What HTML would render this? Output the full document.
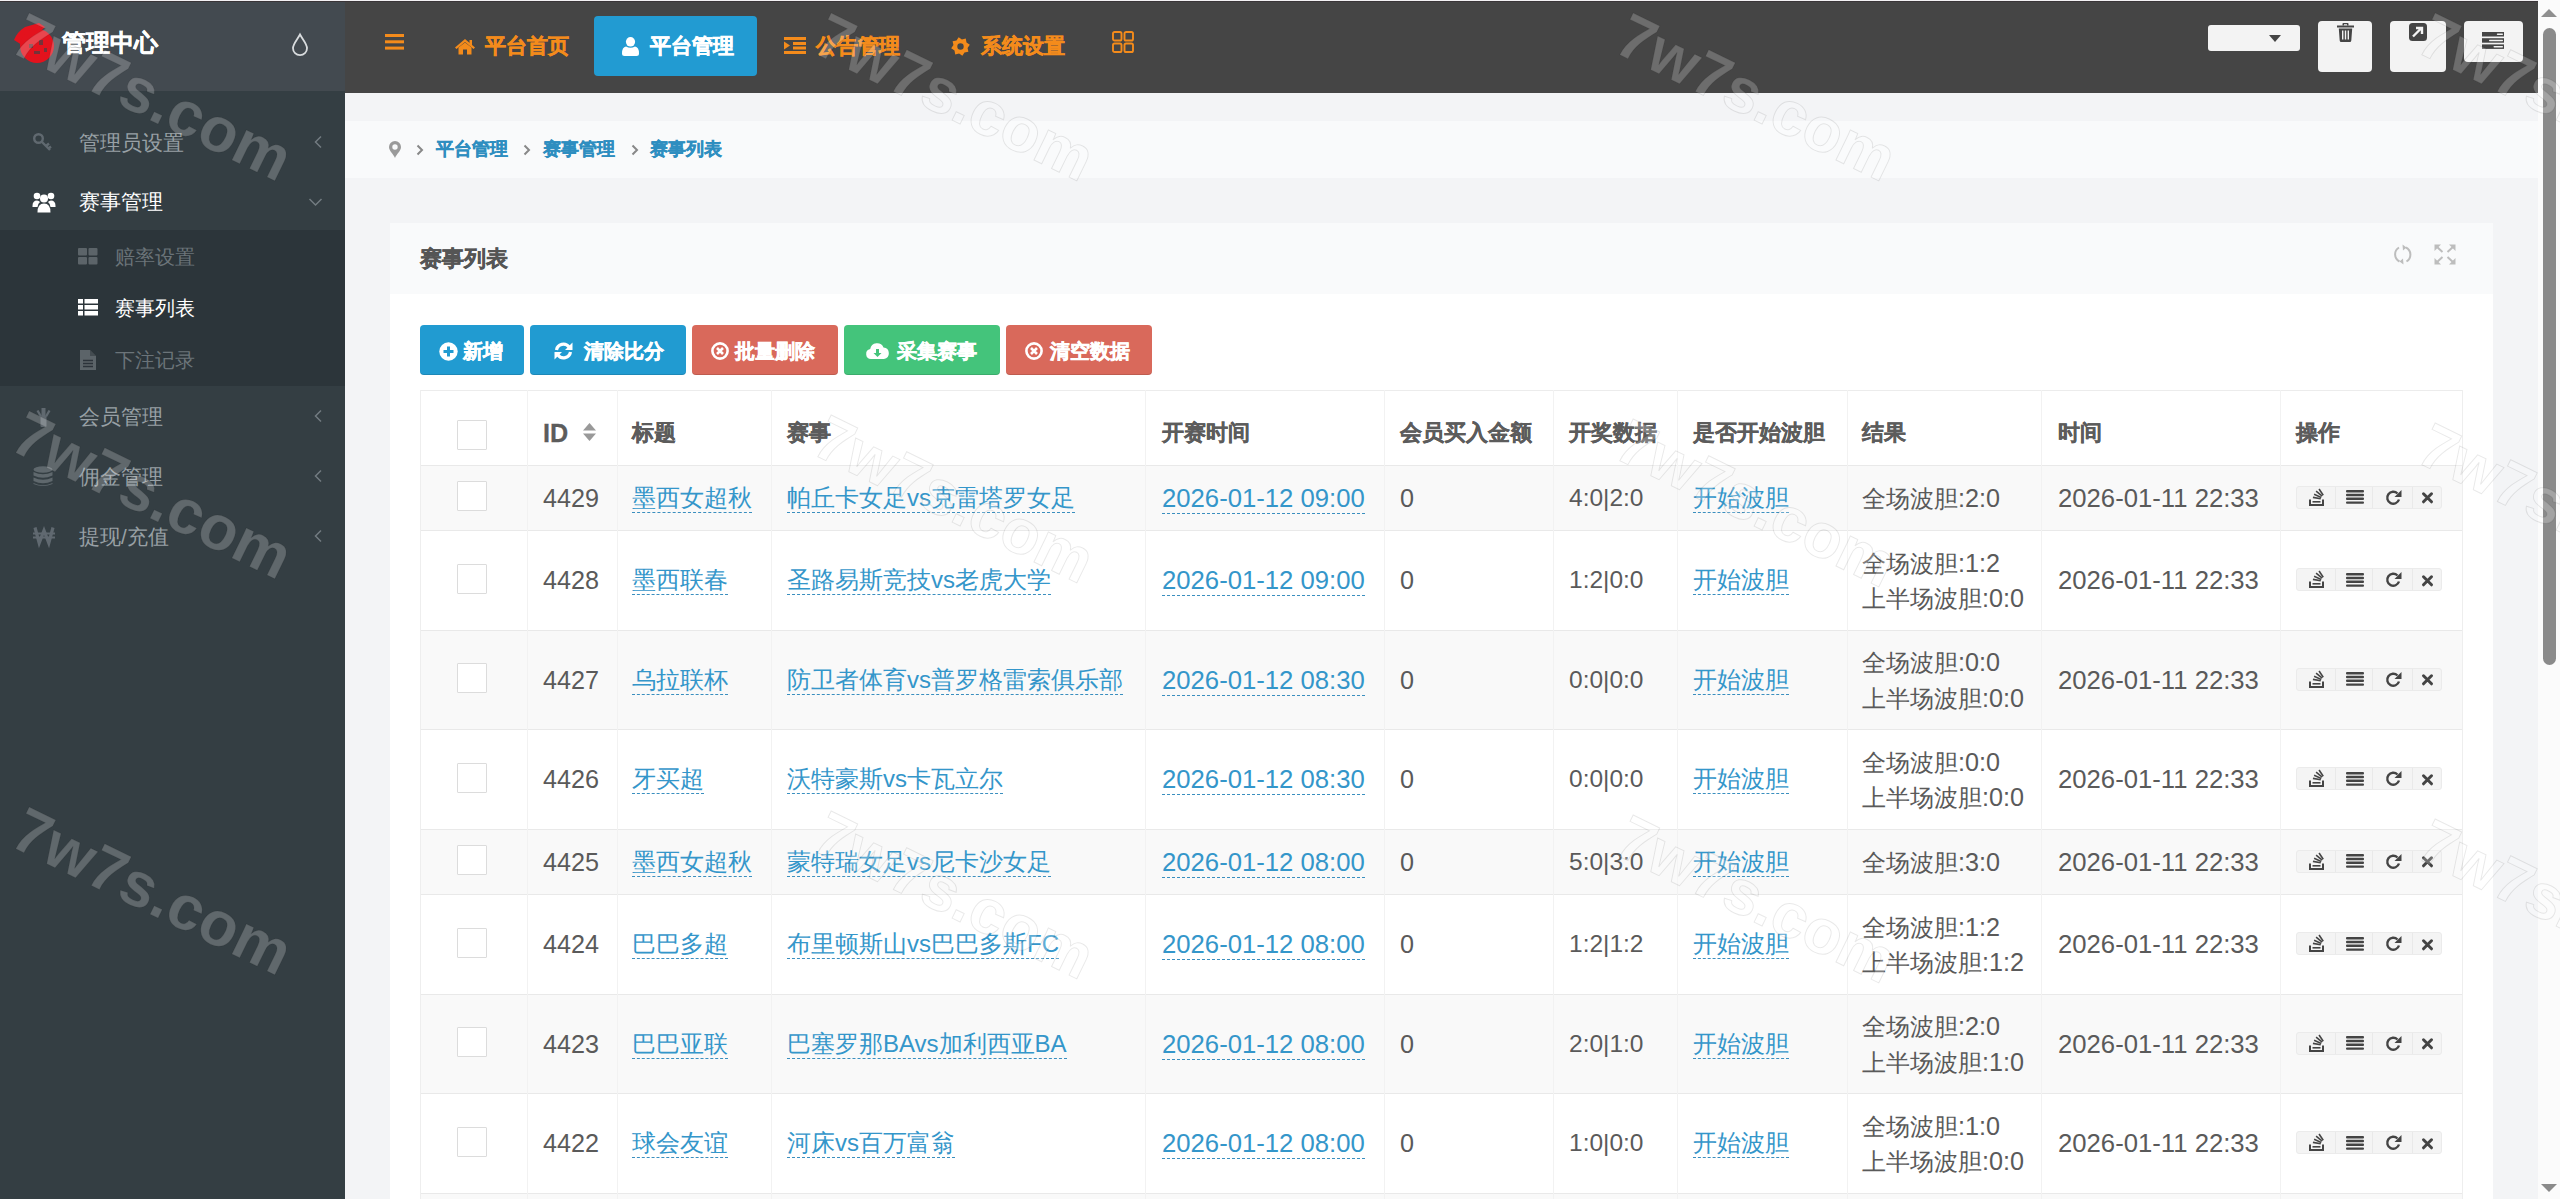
<!DOCTYPE html>
<html><head><meta charset="utf-8"><style>
*{box-sizing:border-box;margin:0;padding:0}
html,body{width:2560px;height:1199px;overflow:hidden}
body{position:relative;background:#f3f4f6;font-family:"Liberation Sans",sans-serif;color:#555}
.a{position:absolute;white-space:nowrap}
svg{position:absolute;display:block;overflow:visible}

#side{position:absolute;left:0;top:0;width:345px;height:1199px;background:#343e43}
#brand{position:absolute;left:0;top:0;width:345px;height:91px;background:#434a50}
#sub{position:absolute;left:0;top:230px;width:345px;height:156px;background:#2c353a}
.mi{position:absolute;left:79px;font-size:20.6px;line-height:30px;margin-top:1px;color:#98a0a5;white-space:nowrap}
.mi.w{color:#fff}
.si{position:absolute;left:115px;font-size:19.5px;line-height:30px;color:#6b7479;white-space:nowrap}
.si.w{color:#fff}
.topline{position:absolute;left:0;top:0;width:2538px;height:2px;background:#3a3538;border-top:1px solid #f3f1f4}

#top{position:absolute;left:345px;top:2px;width:2193px;height:91px;background:#454545}
.nav{position:absolute;top:30px;font-size:20.9px;font-weight:bold;color:#f48b1b;line-height:32px;white-space:nowrap;-webkit-text-stroke:.5px #f48b1b}
#navact{position:absolute;left:594px;top:16px;width:163px;height:60px;background:#229bd2;border-radius:4px}
.tb{position:absolute;background:#f3f3f3;border-radius:4px}

#crumb{position:absolute;left:345px;top:121px;width:2193px;height:57px;background:#f9fafb}
.cr{position:absolute;top:134px;font-size:18px;font-weight:bold;color:#2e8ec0;line-height:30px;white-space:nowrap;-webkit-text-stroke:.3px #2e8ec0}
#panel{position:absolute;left:390px;top:223px;width:2103px;height:980px;background:#fff}
#phead{position:absolute;left:390px;top:223px;width:2103px;height:71px;background:#f9fafb}
#ptitle{position:absolute;left:420px;top:244px;font-size:22px;font-weight:bold;color:#555;line-height:30px;-webkit-text-stroke:.4px #555}
.btn{position:absolute;top:325px;height:50px;border-radius:4px}
.bt{position:absolute;top:336px;font-size:20px;font-weight:bold;color:#fff;line-height:30px;white-space:nowrap;-webkit-text-stroke:.5px #fff}

.tc{position:absolute;white-space:nowrap;font-size:24px;line-height:34.29px;color:#5a5a5a}
.th{position:absolute;white-space:nowrap;font-size:21.8px;line-height:34.29px;color:#5c5c5c;font-weight:bold;-webkit-text-stroke:.3px #5c5c5c}
.lk{color:#3496ca;border-bottom:1px dashed #3b8fbf;padding-bottom:1px}
.n{font-size:25.2px}.d{font-size:25.7px}.sc{font-size:24.5px}
.cb{position:absolute;width:30px;height:30px;border:1px solid #dcdcdc;background:#fff;border-radius:1px}
.ops{position:absolute;height:23px;width:146px;background:#f4f4f4;border:1px solid #ebebeb;border-radius:3px}

.wm{position:absolute;font-family:"Liberation Sans",sans-serif;font-size:63px;font-weight:bold;color:rgba(255,255,255,.22);-webkit-text-stroke:1px rgba(0,0,0,.09);transform-origin:0 0;transform:rotate(26deg);white-space:nowrap;line-height:1;pointer-events:none}
</style></head>
<body>
<div id="side"></div><div id="brand"></div><div id="sub"></div><div class="topline"></div>
<svg style="left:9px;top:18px" width="50" height="48" viewBox="0 0 50 48">
<g fill="#e3121d">
<path d="M5 22 Q8 14 16 9 L30 5 L36 9 L24 20 L13 27 Z"/>
<circle cx="28" cy="28" r="17"/>
</g>
<g fill="#5a3a40" opacity=".8"><rect x="20" y="26" width="4" height="4"/><rect x="30" y="22" width="4" height="5"/><rect x="25" y="33" width="6" height="3"/><rect x="35" y="30" width="3" height="4"/></g>
</svg>
<div class="a" style="left:62px;top:27px;font-size:23.5px;font-weight:bold;color:#fff;line-height:32px;-webkit-text-stroke:.4px #fff">管理中心</div>
<svg style="left:291px;top:33px" width="18" height="23" viewBox="0 0 18 23"><path d="M9 1.5 C12 7 16 11 16 15.2 A7 7 0 0 1 2 15.2 C2 11 6 7 9 1.5 Z" fill="none" stroke="#d9dcde" stroke-width="1.8"/></svg>
<div class="mi" style="top:127px">管理员设置</div>
<div class="mi w" style="top:186px">赛事管理</div>
<div class="si" style="top:242px">赔率设置</div>
<div class="si w" style="top:293px">赛事列表</div>
<div class="si" style="top:345px">下注记录</div>
<div class="mi" style="top:401px">会员管理</div>
<div class="mi" style="top:461px">佣金管理</div>
<div class="mi" style="top:521px">提现/充值</div>
<svg style="left:313px;top:135px" width="10" height="14" viewBox="0 0 10 14"><path d="M8 1.5 L2.5 7 L8 12.5" fill="none" stroke="#737c81" stroke-width="1.5"/></svg>
<svg style="left:313px;top:409px" width="10" height="14" viewBox="0 0 10 14"><path d="M8 1.5 L2.5 7 L8 12.5" fill="none" stroke="#737c81" stroke-width="1.5"/></svg>
<svg style="left:313px;top:469px" width="10" height="14" viewBox="0 0 10 14"><path d="M8 1.5 L2.5 7 L8 12.5" fill="none" stroke="#737c81" stroke-width="1.5"/></svg>
<svg style="left:313px;top:529px" width="10" height="14" viewBox="0 0 10 14"><path d="M8 1.5 L2.5 7 L8 12.5" fill="none" stroke="#737c81" stroke-width="1.5"/></svg>
<svg style="left:308px;top:197px" width="15" height="10" viewBox="0 0 15 10"><path d="M1.5 2 L7.5 8 L13.5 2" fill="none" stroke="#737c81" stroke-width="1.5"/></svg>
<svg style="left:32px;top:132px" width="22" height="20" viewBox="0 0 22 20"><g fill="none" stroke="#606970" stroke-width="2.4"><circle cx="6.5" cy="6.5" r="4.3"/><path d="M9.5 9.5 L18 18 M14 14 L17 11.5 M16.5 16.5 L19 14.5"/></g></svg>
<svg style="left:32px;top:191px" width="24" height="22" viewBox="0 0 24 22"><g fill="#fff">
<circle cx="5" cy="5" r="3.3"/><circle cx="19" cy="5" r="3.3"/><circle cx="12" cy="7.5" r="4"/>
<path d="M0.5 15 Q0.5 9.5 5 9.5 Q7 9.5 8 11 Q5.5 13 5.5 16 L0.5 16 Z"/><path d="M23.5 15 Q23.5 9.5 19 9.5 Q17 9.5 16 11 Q18.5 13 18.5 16 L23.5 16 Z"/>
<path d="M5.5 21.5 Q5.5 12.5 12 12.5 Q18.5 12.5 18.5 21.5 Z"/></g></svg>
<svg style="left:78px;top:248px" width="20" height="17" viewBox="0 0 20 17"><g fill="#5c6469"><rect x="0" y="0" width="9" height="7.5" rx="1"/><rect x="10.5" y="0" width="9" height="7.5" rx="1"/><rect x="0" y="9" width="9" height="7.5" rx="1"/><rect x="10.5" y="9" width="9" height="7.5" rx="1"/></g></svg>
<svg style="left:78px;top:299px" width="20" height="17" viewBox="0 0 20 17"><g fill="#fff"><rect x="0" y="0" width="5" height="4.5"/><rect x="6.5" y="0" width="13.5" height="4.5"/><rect x="0" y="6" width="5" height="4.5"/><rect x="6.5" y="6" width="13.5" height="4.5"/><rect x="0" y="12" width="5" height="4.5"/><rect x="6.5" y="12" width="13.5" height="4.5"/></g></svg>
<svg style="left:80px;top:350px" width="16" height="20" viewBox="0 0 16 20"><path d="M0 0 H10 L16 6 V20 H0 Z" fill="#5c6469"/><path d="M10 0 V6 H16" fill="#2c333a" opacity=".5"/><g stroke="#2c333a" stroke-width="1.3"><path d="M3 10.5 H13 M3 13.5 H13 M3 16.5 H13"/></g></svg>
<svg style="left:36px;top:408px" width="15" height="19" viewBox="0 0 15 19"><g fill="#606970"><path d="M5.5 0 H9.5 V8 H5.5 Z"/><path d="M0.5 3 L2.5 2 L6 8 L4 9 Z"/><path d="M14.5 3 L12.5 2 L9 8 L11 9 Z"/><rect x="4.5" y="8" width="6" height="11" rx="1"/></g></svg>
<svg style="left:33px;top:466px" width="20" height="21" viewBox="0 0 20 21"><g fill="#5f686d"><ellipse cx="10" cy="3.5" rx="9.5" ry="3.3"/><path d="M0.5 6 Q10 10.5 19.5 6 V9.5 Q10 14 0.5 9.5 Z"/><path d="M0.5 11.5 Q10 16 19.5 11.5 V15 Q10 19.5 0.5 15 Z"/><path d="M0.5 17 Q10 21.5 19.5 17 V18 Q10 22 0.5 18 Z"/></g></svg>
<svg style="left:33px;top:527px" width="22" height="17" viewBox="0 0 22 17"><g fill="none" stroke="#606970"><path d="M2 0.5 L6.2 16 L11 3.5 L15.8 16 L20 0.5" stroke-width="3.2"/><path d="M0 6.5 H22 M0 10.5 H22" stroke-width="1.8"/></g></svg>
<div id="top"></div><div id="navact"></div>
<svg style="left:385px;top:34px" width="19" height="16" viewBox="0 0 19 16"><g fill="#f48b1b"><rect x="0" y="0" width="19" height="3"/><rect x="0" y="6.3" width="19" height="3"/><rect x="0" y="12.6" width="19" height="3"/></g></svg>
<svg style="left:455px;top:39px" width="20" height="16" viewBox="0 0 20 16"><g fill="#f48b1b"><path d="M10 0 L20 8.5 L18.5 10 L10 3 L1.5 10 L0 8.5 Z"/><path d="M3.5 8.5 L10 3.5 L16.5 8.5 V15.5 H12 V10.5 H8 V15.5 H3.5 Z"/><rect x="14.5" y="1" width="2.5" height="5"/></g></svg>
<div class="nav" style="left:485px">平台首页</div>
<svg style="left:622px;top:37px" width="17" height="19" viewBox="0 0 17 19"><g fill="#fff"><ellipse cx="8.5" cy="4.8" rx="4.6" ry="4.8"/><path d="M0 16.5 Q0 10 4 9.5 Q8.5 12 13 9.5 Q17 10 17 16.5 Q17 19 14.5 19 H2.5 Q0 19 0 16.5 Z"/></g></svg>
<div class="nav" style="left:650px;color:#fff;-webkit-text-stroke:.5px #fff">平台管理</div>
<svg style="left:784px;top:37px" width="22" height="17" viewBox="0 0 22 17"><g fill="#f48b1b"><rect x="0" y="0" width="22" height="3"/><rect x="9" y="5" width="13" height="3"/><rect x="9" y="9.5" width="13" height="3"/><rect x="0" y="14" width="22" height="3"/><path d="M0 4.5 L6 8.5 L0 12.5 Z"/></g></svg>
<div class="nav" style="left:816px">公告管理</div>
<svg style="left:951px;top:37px" width="19" height="19" viewBox="0 0 19 19"><path fill="#f48b1b" fill-rule="evenodd" d="M18.82,7.65 L16.56,10.90 L17.40,14.78 L13.50,15.49 L11.35,18.82 L8.10,16.56 L4.22,17.40 L3.51,13.50 L0.18,11.35 L2.44,8.10 L1.60,4.22 L5.50,3.51 L7.65,0.18 L10.90,2.44 L14.78,1.60 L15.49,5.50 Z M9.5 6.3 A3.2 3.2 0 1 0 9.5 12.7 A3.2 3.2 0 1 0 9.5 6.3 Z"/></svg>
<div class="nav" style="left:981px">系统设置</div>
<svg style="left:1112px;top:31px" width="22" height="22" viewBox="0 0 22 22"><g fill="none" stroke="#f48b1b" stroke-width="1.9"><rect x="1" y="1" width="8.5" height="8.5" rx="1.6"/><rect x="12.5" y="1" width="8.5" height="8.5" rx="1.6"/><rect x="1" y="12.5" width="8.5" height="8.5" rx="1.6"/><rect x="12.5" y="12.5" width="8.5" height="8.5" rx="1.6"/></g></svg>
<div class="tb" style="left:2208px;top:25px;width:92px;height:26px;border-radius:3px"></div>
<svg style="left:2269px;top:35px" width="12" height="7" viewBox="0 0 12 7"><path d="M0 0 H12 L6 7 Z" fill="#444"/></svg>
<div class="tb" style="left:2318px;top:21px;width:54px;height:51px"></div>
<svg style="left:2337px;top:23px" width="17" height="19" viewBox="0 0 17 19"><g fill="#454545"><rect x="0" y="2.5" width="17" height="2"/><path d="M5.5 2.5 V0.8 Q5.5 0 6.3 0 H10.7 Q11.5 0 11.5 0.8 V2.5 H10 V1.3 H7 V2.5 Z"/><path d="M1.8 5.5 H15.2 L14.3 17.5 Q14.2 19 12.8 19 H4.2 Q2.8 19 2.7 17.5 Z"/></g><g fill="#f3f3f3"><rect x="5" y="7.5" width="1.4" height="9"/><rect x="7.8" y="7.5" width="1.4" height="9"/><rect x="10.6" y="7.5" width="1.4" height="9"/></g></svg>
<div class="tb" style="left:2390px;top:21px;width:56px;height:51px"></div>
<svg style="left:2409px;top:23px" width="18" height="18" viewBox="0 0 18 18"><rect x="0" y="0" width="18" height="18" rx="3.5" fill="#454545"/><path d="M4 13.5 L12 5.5 M7 5 H13 V11" fill="none" stroke="#f3f3f3" stroke-width="2.4"/></svg>
<div class="tb" style="left:2464px;top:21px;width:59px;height:41px"></div>
<svg style="left:2482px;top:32px" width="22" height="17" viewBox="0 0 22 17"><g fill="#454545"><rect x="0" y="0" width="22" height="4.5"/><rect x="0" y="6.2" width="22" height="4.5"/><rect x="0" y="12.4" width="22" height="4.5"/></g><g fill="#f3f3f3"><rect x="14.8" y="1.5" width="6.2" height="1.5" rx=".7"/><rect x="7" y="7.7" width="14" height="1.5" rx=".7"/><rect x="11.5" y="13.9" width="9.5" height="1.5" rx=".7"/></g></svg>
<div class="a" style="left:2538px;top:0;width:22px;height:1199px;background:#fbfbfb"></div>
<svg style="left:2541px;top:9px" width="16" height="8" viewBox="0 0 16 8"><path d="M0 8 L8 0 L16 8 Z" fill="#8f8f8f"/></svg>
<div class="a" style="left:2543px;top:28px;width:13px;height:637px;background:#8a8a8a;border-radius:6.5px"></div>
<svg style="left:2541px;top:1184px" width="16" height="8" viewBox="0 0 16 8"><path d="M0 0 L8 8 L16 0 Z" fill="#8a8a8a"/></svg>
<div id="crumb"></div>
<svg style="left:389px;top:141px" width="12" height="17" viewBox="0 0 12 17"><path fill="#9a9a9a" fill-rule="evenodd" d="M6 0 A6 6 0 0 1 12 6 C12 10 7.5 13 6 17 C4.5 13 0 10 0 6 A6 6 0 0 1 6 0 Z M6 3.3 A2.7 2.7 0 1 0 6 8.7 A2.7 2.7 0 1 0 6 3.3 Z"/></svg>
<svg style="left:416px;top:144px" width="8" height="12" viewBox="0 0 8 12"><path d="M1.5 1.5 L6 6 L1.5 10.5" fill="none" stroke="#888" stroke-width="2"/></svg>
<svg style="left:523px;top:144px" width="8" height="12" viewBox="0 0 8 12"><path d="M1.5 1.5 L6 6 L1.5 10.5" fill="none" stroke="#888" stroke-width="2"/></svg>
<svg style="left:631px;top:144px" width="8" height="12" viewBox="0 0 8 12"><path d="M1.5 1.5 L6 6 L1.5 10.5" fill="none" stroke="#888" stroke-width="2"/></svg>
<div class="cr" style="left:436px">平台管理</div>
<div class="cr" style="left:543px">赛事管理</div>
<div class="cr" style="left:650px">赛事列表</div>
<div id="panel"></div><div id="phead"></div><div id="ptitle">赛事列表</div>
<svg style="left:2393px;top:244px" width="20" height="21" viewBox="0 0 20 21"><g fill="none" stroke="#bdbdbd" stroke-width="2"><path d="M6 3.5 A8 8 0 0 0 6.5 17.5"/><path d="M13.5 17.5 A8 8 0 0 0 13 3.5"/></g><g fill="#bdbdbd"><path d="M9.5 0.5 L13.5 3.5 L10 6.5 Z"/><path d="M10.5 20.5 L6.5 17.5 L10 14.5 Z"/></g></svg>
<svg style="left:2434px;top:244px" width="22" height="21" viewBox="0 0 22 21"><g fill="none" stroke="#bdbdbd" stroke-width="2"><path d="M2 2 L8.5 8 M20 2 L13.5 8 M2 19 L8.5 13 M20 19 L13.5 13"/></g><g fill="#bdbdbd"><path d="M0.5 0.5 H7 L0.5 7 Z"/><path d="M21.5 0.5 H15 L21.5 7 Z"/><path d="M0.5 20.5 H7 L0.5 14 Z"/><path d="M21.5 20.5 H15 L21.5 14 Z"/></g></svg>
<div class="btn" style="left:420px;width:104px;background:#219bd1;box-shadow:inset 0 -1px 0 rgba(0,0,0,.12)"></div>
<svg style="left:439px;top:342px" width="19" height="19" viewBox="0 0 19 19"><circle cx="9.5" cy="9.5" r="9.2" fill="#fff"/><path d="M9.5 4.5 V14.5 M4.5 9.5 H14.5" stroke="#219bd1" stroke-width="3"/></svg>
<div class="bt" style="left:463px">新增</div>
<div class="btn" style="left:530px;width:156px;background:#219bd1;box-shadow:inset 0 -1px 0 rgba(0,0,0,.12)"></div>
<svg style="left:554px;top:342px" width="19" height="18" viewBox="0 0 19 18"><g fill="none" stroke="#fff" stroke-width="3.2"><path d="M2.5 8 A7 7 0 0 1 15 5"/><path d="M16.5 10 A7 7 0 0 1 4 13"/></g><g fill="#fff"><path d="M18.5 0.5 V8 H11 Z"/><path d="M0.5 17.5 V10 H8 Z"/></g></svg>
<div class="bt" style="left:584px">清除比分</div>
<div class="btn" style="left:692px;width:146px;background:#d9695b;box-shadow:inset 0 -1px 0 rgba(0,0,0,.12)"></div>
<svg style="left:711px;top:342px" width="18" height="18" viewBox="0 0 18 18"><circle cx="9" cy="9" r="7.6" fill="none" stroke="#fff" stroke-width="2.6"/><path d="M6 6 L12 12 M12 6 L6 12" stroke="#fff" stroke-width="2.6"/></svg>
<div class="bt" style="left:735px">批量删除</div>
<div class="btn" style="left:844px;width:156px;background:#44c47b;box-shadow:inset 0 -1px 0 rgba(0,0,0,.12)"></div>
<svg style="left:866px;top:343px" width="23" height="16" viewBox="0 0 23 16"><path fill="#fff" d="M5 16 A5 5 0 0 1 4.2 6.1 A7 7 0 0 1 17.5 4.5 A5.8 5.8 0 0 1 18 16 Z"/><path fill="#44c47b" d="M10 6 H13 V10 H15.5 L11.5 14 L7.5 10 H10 Z"/></svg>
<div class="bt" style="left:897px">采集赛事</div>
<div class="btn" style="left:1006px;width:146px;background:#d9695b;box-shadow:inset 0 -1px 0 rgba(0,0,0,.12)"></div>
<svg style="left:1025px;top:342px" width="18" height="18" viewBox="0 0 18 18"><circle cx="9" cy="9" r="7.6" fill="none" stroke="#fff" stroke-width="2.6"/><path d="M6 6 L12 12 M12 6 L6 12" stroke="#fff" stroke-width="2.6"/></svg>
<div class="bt" style="left:1050px">清空数据</div>
<div class="a" style="left:420px;top:465.00px;width:2042px;height:65.29px;background:#f9f9f9;border-top:1px solid #e9e9e9"></div>
<div class="a" style="left:420px;top:530.29px;width:2042px;height:99.57px;background:#fff;border-top:1px solid #e9e9e9"></div>
<div class="a" style="left:420px;top:629.86px;width:2042px;height:99.57px;background:#f9f9f9;border-top:1px solid #e9e9e9"></div>
<div class="a" style="left:420px;top:729.43px;width:2042px;height:99.57px;background:#fff;border-top:1px solid #e9e9e9"></div>
<div class="a" style="left:420px;top:829.00px;width:2042px;height:65.29px;background:#f9f9f9;border-top:1px solid #e9e9e9"></div>
<div class="a" style="left:420px;top:894.29px;width:2042px;height:99.57px;background:#fff;border-top:1px solid #e9e9e9"></div>
<div class="a" style="left:420px;top:993.86px;width:2042px;height:99.57px;background:#f9f9f9;border-top:1px solid #e9e9e9"></div>
<div class="a" style="left:420px;top:1093.43px;width:2042px;height:99.57px;background:#fff;border-top:1px solid #e9e9e9"></div>
<div class="a" style="left:420px;top:1193.00px;width:2042px;height:80.00px;background:#f9f9f9;border-top:1px solid #e9e9e9"></div>
<div class="a" style="left:420px;top:390px;width:2042px;height:1px;background:#ececec"></div>
<div class="a" style="left:420px;top:390px;width:1px;height:809px;background:#eeeeee"></div>
<div class="a" style="left:527px;top:390px;width:1px;height:809px;background:#f2f2f2"></div>
<div class="a" style="left:617px;top:390px;width:1px;height:809px;background:#f2f2f2"></div>
<div class="a" style="left:771px;top:390px;width:1px;height:809px;background:#f2f2f2"></div>
<div class="a" style="left:1145px;top:390px;width:1px;height:809px;background:#f2f2f2"></div>
<div class="a" style="left:1384px;top:390px;width:1px;height:809px;background:#f2f2f2"></div>
<div class="a" style="left:1553px;top:390px;width:1px;height:809px;background:#f2f2f2"></div>
<div class="a" style="left:1677px;top:390px;width:1px;height:809px;background:#f2f2f2"></div>
<div class="a" style="left:1847px;top:390px;width:1px;height:809px;background:#f2f2f2"></div>
<div class="a" style="left:2041px;top:390px;width:1px;height:809px;background:#f2f2f2"></div>
<div class="a" style="left:2280px;top:390px;width:1px;height:809px;background:#f2f2f2"></div>
<div class="a" style="left:2462px;top:390px;width:1px;height:809px;background:#eeeeee"></div>
<div class="cb" style="left:457px;top:420px"></div>
<div class="th" style="left:543px;top:416px"><span class="n">ID</span></div>
<div class="th" style="left:632px;top:416px">标题</div>
<div class="th" style="left:787px;top:416px">赛事</div>
<div class="th" style="left:1162px;top:416px">开赛时间</div>
<div class="th" style="left:1400px;top:416px">会员买入金额</div>
<div class="th" style="left:1569px;top:416px">开奖数据</div>
<div class="th" style="left:1693px;top:416px">是否开始波胆</div>
<div class="th" style="left:1862px;top:416px">结果</div>
<div class="th" style="left:2058px;top:416px">时间</div>
<div class="th" style="left:2296px;top:416px">操作</div>
<svg style="left:583px;top:423px" width="13" height="18" viewBox="0 0 13 18"><g fill="#999"><path d="M6.5 0 L13 7.5 H0 Z"/><path d="M6.5 18 L13 10.5 H0 Z"/></g></svg>
<div class="cb" style="left:457px;top:481.14px"></div>
<div class="tc" style="left:543px;top:480.50px"><span class="n">4429</span></div>
<div class="tc" style="left:632px;top:480.50px"><span class="lk">墨西女超秋</span></div>
<div class="tc" style="left:787px;top:480.50px"><span class="lk">帕丘卡女足vs克雷塔罗女足</span></div>
<div class="tc" style="left:1162px;top:480.50px"><span class="lk d">2026-01-12 09:00</span></div>
<div class="tc" style="left:1400px;top:480.50px"><span class="n">0</span></div>
<div class="tc" style="left:1569px;top:480.50px"><span class="sc">4:0|2:0</span></div>
<div class="tc" style="left:1693px;top:480.50px"><span class="lk">开始波胆</span></div>
<div class="tc" style="left:1862px;top:480.50px">全场波胆<span class="n">:2:0</span></div>
<div class="tc" style="left:2058px;top:480.50px"><span class="d">2026-01-11 22:33</span></div>
<div class="ops" style="left:2296px;top:485.64px"></div><div class="a" style="left:2335px;top:486.64px;width:1px;height:21px;background:#e9e9e9"></div><div class="a" style="left:2372px;top:486.64px;width:1px;height:21px;background:#e9e9e9"></div><div class="a" style="left:2412px;top:486.64px;width:1px;height:21px;background:#e9e9e9"></div><svg style="left:2309px;top:488.64px" width="15" height="17" viewBox="0 0 15 17"><g fill="#444"><path d="M0 10.5 H2 V15 H13 V10.5 H15 V17 H0 Z"/><rect x="3.5" y="12" width="8" height="1.6"/><path d="M3.8 9.2 L11.6 10.6 L11.9 9.1 L4.1 7.6 Z"/><path d="M4.8 5.9 L12 9.2 L12.6 7.8 L5.4 4.5 Z"/><path d="M6.6 2.8 L12.7 7.8 L13.7 6.6 L7.6 1.6 Z"/><path d="M9.4 0.4 L13.6 6.7 L14.9 5.8 L10.7 -0.5 Z"/></g></svg><svg style="left:2346px;top:490.14px" width="18" height="14" viewBox="0 0 18 14"><g fill="#444"><rect x="0" y="0" width="18" height="2.4" rx="1"/><rect x="0" y="3.8" width="18" height="2.4" rx="1"/><rect x="0" y="7.6" width="18" height="2.4" rx="1"/><rect x="0" y="11.4" width="18" height="2.4" rx="1"/></g></svg><svg style="left:2386px;top:489.64px" width="16" height="15" viewBox="0 0 16 15"><path d="M13 9.5 A6 6 0 1 1 11.5 3.5" fill="none" stroke="#444" stroke-width="2.4"/><path d="M15.5 0 V7 H8.5 Z" fill="#444"/></svg><svg style="left:2421px;top:492.14px" width="13" height="12" viewBox="0 0 13 12"><path d="M2.5 1.8 L10.5 9.8 M10.5 1.8 L2.5 9.8" stroke="#444" stroke-width="3" stroke-linecap="round"/></svg>
<div class="cb" style="left:457px;top:563.57px"></div>
<div class="tc" style="left:543px;top:562.93px"><span class="n">4428</span></div>
<div class="tc" style="left:632px;top:562.93px"><span class="lk">墨西联春</span></div>
<div class="tc" style="left:787px;top:562.93px"><span class="lk">圣路易斯竞技vs老虎大学</span></div>
<div class="tc" style="left:1162px;top:562.93px"><span class="lk d">2026-01-12 09:00</span></div>
<div class="tc" style="left:1400px;top:562.93px"><span class="n">0</span></div>
<div class="tc" style="left:1569px;top:562.93px"><span class="sc">1:2|0:0</span></div>
<div class="tc" style="left:1693px;top:562.93px"><span class="lk">开始波胆</span></div>
<div class="tc" style="left:1862px;top:545.78px">全场波胆<span class="n">:1:2</span><br>上半场波胆<span class="n">:0:0</span></div>
<div class="tc" style="left:2058px;top:562.93px"><span class="d">2026-01-11 22:33</span></div>
<div class="ops" style="left:2296px;top:568.07px"></div><div class="a" style="left:2335px;top:569.07px;width:1px;height:21px;background:#e9e9e9"></div><div class="a" style="left:2372px;top:569.07px;width:1px;height:21px;background:#e9e9e9"></div><div class="a" style="left:2412px;top:569.07px;width:1px;height:21px;background:#e9e9e9"></div><svg style="left:2309px;top:571.07px" width="15" height="17" viewBox="0 0 15 17"><g fill="#444"><path d="M0 10.5 H2 V15 H13 V10.5 H15 V17 H0 Z"/><rect x="3.5" y="12" width="8" height="1.6"/><path d="M3.8 9.2 L11.6 10.6 L11.9 9.1 L4.1 7.6 Z"/><path d="M4.8 5.9 L12 9.2 L12.6 7.8 L5.4 4.5 Z"/><path d="M6.6 2.8 L12.7 7.8 L13.7 6.6 L7.6 1.6 Z"/><path d="M9.4 0.4 L13.6 6.7 L14.9 5.8 L10.7 -0.5 Z"/></g></svg><svg style="left:2346px;top:572.57px" width="18" height="14" viewBox="0 0 18 14"><g fill="#444"><rect x="0" y="0" width="18" height="2.4" rx="1"/><rect x="0" y="3.8" width="18" height="2.4" rx="1"/><rect x="0" y="7.6" width="18" height="2.4" rx="1"/><rect x="0" y="11.4" width="18" height="2.4" rx="1"/></g></svg><svg style="left:2386px;top:572.07px" width="16" height="15" viewBox="0 0 16 15"><path d="M13 9.5 A6 6 0 1 1 11.5 3.5" fill="none" stroke="#444" stroke-width="2.4"/><path d="M15.5 0 V7 H8.5 Z" fill="#444"/></svg><svg style="left:2421px;top:574.57px" width="13" height="12" viewBox="0 0 13 12"><path d="M2.5 1.8 L10.5 9.8 M10.5 1.8 L2.5 9.8" stroke="#444" stroke-width="3" stroke-linecap="round"/></svg>
<div class="cb" style="left:457px;top:663.14px"></div>
<div class="tc" style="left:543px;top:662.50px"><span class="n">4427</span></div>
<div class="tc" style="left:632px;top:662.50px"><span class="lk">乌拉联杯</span></div>
<div class="tc" style="left:787px;top:662.50px"><span class="lk">防卫者体育vs普罗格雷索俱乐部</span></div>
<div class="tc" style="left:1162px;top:662.50px"><span class="lk d">2026-01-12 08:30</span></div>
<div class="tc" style="left:1400px;top:662.50px"><span class="n">0</span></div>
<div class="tc" style="left:1569px;top:662.50px"><span class="sc">0:0|0:0</span></div>
<div class="tc" style="left:1693px;top:662.50px"><span class="lk">开始波胆</span></div>
<div class="tc" style="left:1862px;top:645.35px">全场波胆<span class="n">:0:0</span><br>上半场波胆<span class="n">:0:0</span></div>
<div class="tc" style="left:2058px;top:662.50px"><span class="d">2026-01-11 22:33</span></div>
<div class="ops" style="left:2296px;top:667.64px"></div><div class="a" style="left:2335px;top:668.64px;width:1px;height:21px;background:#e9e9e9"></div><div class="a" style="left:2372px;top:668.64px;width:1px;height:21px;background:#e9e9e9"></div><div class="a" style="left:2412px;top:668.64px;width:1px;height:21px;background:#e9e9e9"></div><svg style="left:2309px;top:670.64px" width="15" height="17" viewBox="0 0 15 17"><g fill="#444"><path d="M0 10.5 H2 V15 H13 V10.5 H15 V17 H0 Z"/><rect x="3.5" y="12" width="8" height="1.6"/><path d="M3.8 9.2 L11.6 10.6 L11.9 9.1 L4.1 7.6 Z"/><path d="M4.8 5.9 L12 9.2 L12.6 7.8 L5.4 4.5 Z"/><path d="M6.6 2.8 L12.7 7.8 L13.7 6.6 L7.6 1.6 Z"/><path d="M9.4 0.4 L13.6 6.7 L14.9 5.8 L10.7 -0.5 Z"/></g></svg><svg style="left:2346px;top:672.14px" width="18" height="14" viewBox="0 0 18 14"><g fill="#444"><rect x="0" y="0" width="18" height="2.4" rx="1"/><rect x="0" y="3.8" width="18" height="2.4" rx="1"/><rect x="0" y="7.6" width="18" height="2.4" rx="1"/><rect x="0" y="11.4" width="18" height="2.4" rx="1"/></g></svg><svg style="left:2386px;top:671.64px" width="16" height="15" viewBox="0 0 16 15"><path d="M13 9.5 A6 6 0 1 1 11.5 3.5" fill="none" stroke="#444" stroke-width="2.4"/><path d="M15.5 0 V7 H8.5 Z" fill="#444"/></svg><svg style="left:2421px;top:674.14px" width="13" height="12" viewBox="0 0 13 12"><path d="M2.5 1.8 L10.5 9.8 M10.5 1.8 L2.5 9.8" stroke="#444" stroke-width="3" stroke-linecap="round"/></svg>
<div class="cb" style="left:457px;top:762.71px"></div>
<div class="tc" style="left:543px;top:762.07px"><span class="n">4426</span></div>
<div class="tc" style="left:632px;top:762.07px"><span class="lk">牙买超</span></div>
<div class="tc" style="left:787px;top:762.07px"><span class="lk">沃特豪斯vs卡瓦立尔</span></div>
<div class="tc" style="left:1162px;top:762.07px"><span class="lk d">2026-01-12 08:30</span></div>
<div class="tc" style="left:1400px;top:762.07px"><span class="n">0</span></div>
<div class="tc" style="left:1569px;top:762.07px"><span class="sc">0:0|0:0</span></div>
<div class="tc" style="left:1693px;top:762.07px"><span class="lk">开始波胆</span></div>
<div class="tc" style="left:1862px;top:744.92px">全场波胆<span class="n">:0:0</span><br>上半场波胆<span class="n">:0:0</span></div>
<div class="tc" style="left:2058px;top:762.07px"><span class="d">2026-01-11 22:33</span></div>
<div class="ops" style="left:2296px;top:767.21px"></div><div class="a" style="left:2335px;top:768.21px;width:1px;height:21px;background:#e9e9e9"></div><div class="a" style="left:2372px;top:768.21px;width:1px;height:21px;background:#e9e9e9"></div><div class="a" style="left:2412px;top:768.21px;width:1px;height:21px;background:#e9e9e9"></div><svg style="left:2309px;top:770.21px" width="15" height="17" viewBox="0 0 15 17"><g fill="#444"><path d="M0 10.5 H2 V15 H13 V10.5 H15 V17 H0 Z"/><rect x="3.5" y="12" width="8" height="1.6"/><path d="M3.8 9.2 L11.6 10.6 L11.9 9.1 L4.1 7.6 Z"/><path d="M4.8 5.9 L12 9.2 L12.6 7.8 L5.4 4.5 Z"/><path d="M6.6 2.8 L12.7 7.8 L13.7 6.6 L7.6 1.6 Z"/><path d="M9.4 0.4 L13.6 6.7 L14.9 5.8 L10.7 -0.5 Z"/></g></svg><svg style="left:2346px;top:771.71px" width="18" height="14" viewBox="0 0 18 14"><g fill="#444"><rect x="0" y="0" width="18" height="2.4" rx="1"/><rect x="0" y="3.8" width="18" height="2.4" rx="1"/><rect x="0" y="7.6" width="18" height="2.4" rx="1"/><rect x="0" y="11.4" width="18" height="2.4" rx="1"/></g></svg><svg style="left:2386px;top:771.21px" width="16" height="15" viewBox="0 0 16 15"><path d="M13 9.5 A6 6 0 1 1 11.5 3.5" fill="none" stroke="#444" stroke-width="2.4"/><path d="M15.5 0 V7 H8.5 Z" fill="#444"/></svg><svg style="left:2421px;top:773.71px" width="13" height="12" viewBox="0 0 13 12"><path d="M2.5 1.8 L10.5 9.8 M10.5 1.8 L2.5 9.8" stroke="#444" stroke-width="3" stroke-linecap="round"/></svg>
<div class="cb" style="left:457px;top:845.14px"></div>
<div class="tc" style="left:543px;top:844.50px"><span class="n">4425</span></div>
<div class="tc" style="left:632px;top:844.50px"><span class="lk">墨西女超秋</span></div>
<div class="tc" style="left:787px;top:844.50px"><span class="lk">蒙特瑞女足vs尼卡沙女足</span></div>
<div class="tc" style="left:1162px;top:844.50px"><span class="lk d">2026-01-12 08:00</span></div>
<div class="tc" style="left:1400px;top:844.50px"><span class="n">0</span></div>
<div class="tc" style="left:1569px;top:844.50px"><span class="sc">5:0|3:0</span></div>
<div class="tc" style="left:1693px;top:844.50px"><span class="lk">开始波胆</span></div>
<div class="tc" style="left:1862px;top:844.50px">全场波胆<span class="n">:3:0</span></div>
<div class="tc" style="left:2058px;top:844.50px"><span class="d">2026-01-11 22:33</span></div>
<div class="ops" style="left:2296px;top:849.64px"></div><div class="a" style="left:2335px;top:850.64px;width:1px;height:21px;background:#e9e9e9"></div><div class="a" style="left:2372px;top:850.64px;width:1px;height:21px;background:#e9e9e9"></div><div class="a" style="left:2412px;top:850.64px;width:1px;height:21px;background:#e9e9e9"></div><svg style="left:2309px;top:852.64px" width="15" height="17" viewBox="0 0 15 17"><g fill="#444"><path d="M0 10.5 H2 V15 H13 V10.5 H15 V17 H0 Z"/><rect x="3.5" y="12" width="8" height="1.6"/><path d="M3.8 9.2 L11.6 10.6 L11.9 9.1 L4.1 7.6 Z"/><path d="M4.8 5.9 L12 9.2 L12.6 7.8 L5.4 4.5 Z"/><path d="M6.6 2.8 L12.7 7.8 L13.7 6.6 L7.6 1.6 Z"/><path d="M9.4 0.4 L13.6 6.7 L14.9 5.8 L10.7 -0.5 Z"/></g></svg><svg style="left:2346px;top:854.14px" width="18" height="14" viewBox="0 0 18 14"><g fill="#444"><rect x="0" y="0" width="18" height="2.4" rx="1"/><rect x="0" y="3.8" width="18" height="2.4" rx="1"/><rect x="0" y="7.6" width="18" height="2.4" rx="1"/><rect x="0" y="11.4" width="18" height="2.4" rx="1"/></g></svg><svg style="left:2386px;top:853.64px" width="16" height="15" viewBox="0 0 16 15"><path d="M13 9.5 A6 6 0 1 1 11.5 3.5" fill="none" stroke="#444" stroke-width="2.4"/><path d="M15.5 0 V7 H8.5 Z" fill="#444"/></svg><svg style="left:2421px;top:856.14px" width="13" height="12" viewBox="0 0 13 12"><path d="M2.5 1.8 L10.5 9.8 M10.5 1.8 L2.5 9.8" stroke="#444" stroke-width="3" stroke-linecap="round"/></svg>
<div class="cb" style="left:457px;top:927.57px"></div>
<div class="tc" style="left:543px;top:926.93px"><span class="n">4424</span></div>
<div class="tc" style="left:632px;top:926.93px"><span class="lk">巴巴多超</span></div>
<div class="tc" style="left:787px;top:926.93px"><span class="lk">布里顿斯山vs巴巴多斯FC</span></div>
<div class="tc" style="left:1162px;top:926.93px"><span class="lk d">2026-01-12 08:00</span></div>
<div class="tc" style="left:1400px;top:926.93px"><span class="n">0</span></div>
<div class="tc" style="left:1569px;top:926.93px"><span class="sc">1:2|1:2</span></div>
<div class="tc" style="left:1693px;top:926.93px"><span class="lk">开始波胆</span></div>
<div class="tc" style="left:1862px;top:909.78px">全场波胆<span class="n">:1:2</span><br>上半场波胆<span class="n">:1:2</span></div>
<div class="tc" style="left:2058px;top:926.93px"><span class="d">2026-01-11 22:33</span></div>
<div class="ops" style="left:2296px;top:932.07px"></div><div class="a" style="left:2335px;top:933.07px;width:1px;height:21px;background:#e9e9e9"></div><div class="a" style="left:2372px;top:933.07px;width:1px;height:21px;background:#e9e9e9"></div><div class="a" style="left:2412px;top:933.07px;width:1px;height:21px;background:#e9e9e9"></div><svg style="left:2309px;top:935.07px" width="15" height="17" viewBox="0 0 15 17"><g fill="#444"><path d="M0 10.5 H2 V15 H13 V10.5 H15 V17 H0 Z"/><rect x="3.5" y="12" width="8" height="1.6"/><path d="M3.8 9.2 L11.6 10.6 L11.9 9.1 L4.1 7.6 Z"/><path d="M4.8 5.9 L12 9.2 L12.6 7.8 L5.4 4.5 Z"/><path d="M6.6 2.8 L12.7 7.8 L13.7 6.6 L7.6 1.6 Z"/><path d="M9.4 0.4 L13.6 6.7 L14.9 5.8 L10.7 -0.5 Z"/></g></svg><svg style="left:2346px;top:936.57px" width="18" height="14" viewBox="0 0 18 14"><g fill="#444"><rect x="0" y="0" width="18" height="2.4" rx="1"/><rect x="0" y="3.8" width="18" height="2.4" rx="1"/><rect x="0" y="7.6" width="18" height="2.4" rx="1"/><rect x="0" y="11.4" width="18" height="2.4" rx="1"/></g></svg><svg style="left:2386px;top:936.07px" width="16" height="15" viewBox="0 0 16 15"><path d="M13 9.5 A6 6 0 1 1 11.5 3.5" fill="none" stroke="#444" stroke-width="2.4"/><path d="M15.5 0 V7 H8.5 Z" fill="#444"/></svg><svg style="left:2421px;top:938.57px" width="13" height="12" viewBox="0 0 13 12"><path d="M2.5 1.8 L10.5 9.8 M10.5 1.8 L2.5 9.8" stroke="#444" stroke-width="3" stroke-linecap="round"/></svg>
<div class="cb" style="left:457px;top:1027.14px"></div>
<div class="tc" style="left:543px;top:1026.50px"><span class="n">4423</span></div>
<div class="tc" style="left:632px;top:1026.50px"><span class="lk">巴巴亚联</span></div>
<div class="tc" style="left:787px;top:1026.50px"><span class="lk">巴塞罗那BAvs加利西亚BA</span></div>
<div class="tc" style="left:1162px;top:1026.50px"><span class="lk d">2026-01-12 08:00</span></div>
<div class="tc" style="left:1400px;top:1026.50px"><span class="n">0</span></div>
<div class="tc" style="left:1569px;top:1026.50px"><span class="sc">2:0|1:0</span></div>
<div class="tc" style="left:1693px;top:1026.50px"><span class="lk">开始波胆</span></div>
<div class="tc" style="left:1862px;top:1009.35px">全场波胆<span class="n">:2:0</span><br>上半场波胆<span class="n">:1:0</span></div>
<div class="tc" style="left:2058px;top:1026.50px"><span class="d">2026-01-11 22:33</span></div>
<div class="ops" style="left:2296px;top:1031.64px"></div><div class="a" style="left:2335px;top:1032.64px;width:1px;height:21px;background:#e9e9e9"></div><div class="a" style="left:2372px;top:1032.64px;width:1px;height:21px;background:#e9e9e9"></div><div class="a" style="left:2412px;top:1032.64px;width:1px;height:21px;background:#e9e9e9"></div><svg style="left:2309px;top:1034.64px" width="15" height="17" viewBox="0 0 15 17"><g fill="#444"><path d="M0 10.5 H2 V15 H13 V10.5 H15 V17 H0 Z"/><rect x="3.5" y="12" width="8" height="1.6"/><path d="M3.8 9.2 L11.6 10.6 L11.9 9.1 L4.1 7.6 Z"/><path d="M4.8 5.9 L12 9.2 L12.6 7.8 L5.4 4.5 Z"/><path d="M6.6 2.8 L12.7 7.8 L13.7 6.6 L7.6 1.6 Z"/><path d="M9.4 0.4 L13.6 6.7 L14.9 5.8 L10.7 -0.5 Z"/></g></svg><svg style="left:2346px;top:1036.14px" width="18" height="14" viewBox="0 0 18 14"><g fill="#444"><rect x="0" y="0" width="18" height="2.4" rx="1"/><rect x="0" y="3.8" width="18" height="2.4" rx="1"/><rect x="0" y="7.6" width="18" height="2.4" rx="1"/><rect x="0" y="11.4" width="18" height="2.4" rx="1"/></g></svg><svg style="left:2386px;top:1035.64px" width="16" height="15" viewBox="0 0 16 15"><path d="M13 9.5 A6 6 0 1 1 11.5 3.5" fill="none" stroke="#444" stroke-width="2.4"/><path d="M15.5 0 V7 H8.5 Z" fill="#444"/></svg><svg style="left:2421px;top:1038.14px" width="13" height="12" viewBox="0 0 13 12"><path d="M2.5 1.8 L10.5 9.8 M10.5 1.8 L2.5 9.8" stroke="#444" stroke-width="3" stroke-linecap="round"/></svg>
<div class="cb" style="left:457px;top:1126.71px"></div>
<div class="tc" style="left:543px;top:1126.07px"><span class="n">4422</span></div>
<div class="tc" style="left:632px;top:1126.07px"><span class="lk">球会友谊</span></div>
<div class="tc" style="left:787px;top:1126.07px"><span class="lk">河床vs百万富翁</span></div>
<div class="tc" style="left:1162px;top:1126.07px"><span class="lk d">2026-01-12 08:00</span></div>
<div class="tc" style="left:1400px;top:1126.07px"><span class="n">0</span></div>
<div class="tc" style="left:1569px;top:1126.07px"><span class="sc">1:0|0:0</span></div>
<div class="tc" style="left:1693px;top:1126.07px"><span class="lk">开始波胆</span></div>
<div class="tc" style="left:1862px;top:1108.92px">全场波胆<span class="n">:1:0</span><br>上半场波胆<span class="n">:0:0</span></div>
<div class="tc" style="left:2058px;top:1126.07px"><span class="d">2026-01-11 22:33</span></div>
<div class="ops" style="left:2296px;top:1131.21px"></div><div class="a" style="left:2335px;top:1132.21px;width:1px;height:21px;background:#e9e9e9"></div><div class="a" style="left:2372px;top:1132.21px;width:1px;height:21px;background:#e9e9e9"></div><div class="a" style="left:2412px;top:1132.21px;width:1px;height:21px;background:#e9e9e9"></div><svg style="left:2309px;top:1134.21px" width="15" height="17" viewBox="0 0 15 17"><g fill="#444"><path d="M0 10.5 H2 V15 H13 V10.5 H15 V17 H0 Z"/><rect x="3.5" y="12" width="8" height="1.6"/><path d="M3.8 9.2 L11.6 10.6 L11.9 9.1 L4.1 7.6 Z"/><path d="M4.8 5.9 L12 9.2 L12.6 7.8 L5.4 4.5 Z"/><path d="M6.6 2.8 L12.7 7.8 L13.7 6.6 L7.6 1.6 Z"/><path d="M9.4 0.4 L13.6 6.7 L14.9 5.8 L10.7 -0.5 Z"/></g></svg><svg style="left:2346px;top:1135.71px" width="18" height="14" viewBox="0 0 18 14"><g fill="#444"><rect x="0" y="0" width="18" height="2.4" rx="1"/><rect x="0" y="3.8" width="18" height="2.4" rx="1"/><rect x="0" y="7.6" width="18" height="2.4" rx="1"/><rect x="0" y="11.4" width="18" height="2.4" rx="1"/></g></svg><svg style="left:2386px;top:1135.21px" width="16" height="15" viewBox="0 0 16 15"><path d="M13 9.5 A6 6 0 1 1 11.5 3.5" fill="none" stroke="#444" stroke-width="2.4"/><path d="M15.5 0 V7 H8.5 Z" fill="#444"/></svg><svg style="left:2421px;top:1137.71px" width="13" height="12" viewBox="0 0 13 12"><path d="M2.5 1.8 L10.5 9.8 M10.5 1.8 L2.5 9.8" stroke="#444" stroke-width="3" stroke-linecap="round"/></svg>
<div class="wm" style="left:31px;top:3.0px">7w7s.com</div>
<div class="wm" style="left:31px;top:400.5px">7w7s.com</div>
<div class="wm" style="left:31px;top:796.5px">7w7s.com</div>
<div class="wm" style="left:833px;top:3.0px">7w7s.com</div>
<div class="wm" style="left:833px;top:404.5px">7w7s.com</div>
<div class="wm" style="left:833px;top:800.8px">7w7s.com</div>
<div class="wm" style="left:1635px;top:3.0px">7w7s.com</div>
<div class="wm" style="left:1635px;top:408.5px">7w7s.com</div>
<div class="wm" style="left:1635px;top:805.0px">7w7s.com</div>
<div class="wm" style="left:2437px;top:3.0px">7w7s.com</div>
<div class="wm" style="left:2437px;top:412.5px">7w7s.com</div>
<div class="wm" style="left:2437px;top:809.2px">7w7s.com</div>
</body></html>
